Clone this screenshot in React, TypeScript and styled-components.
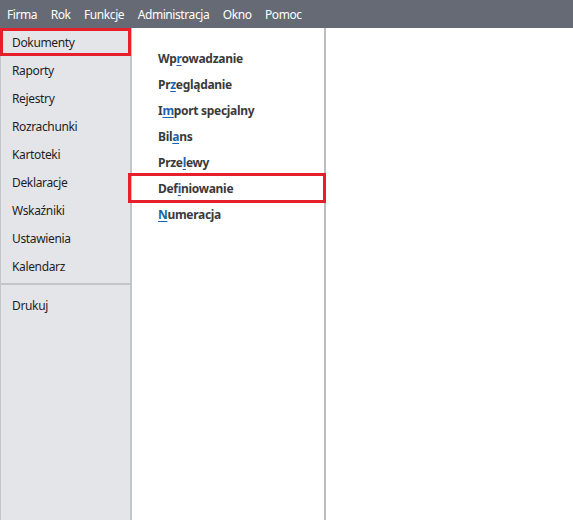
import React from "react";
import styled, { createGlobalStyle } from "styled-components";

const GlobalStyle = createGlobalStyle`
  html, body {
    margin: 0;
    padding: 0;
    background: #ffffff;
  }
  body {
    font-family: "Noto Sans", "Open Sans", sans-serif;
  }
`;

const Page = styled.div`
  width: 573px;
  height: 520px;
  display: flex;
  flex-direction: column;
  overflow: hidden;
`;

const MenuBar = styled.div`
  height: 28px;
  flex: 0 0 28px;
  background: #656a74;
  display: flex;
  align-items: center;
  padding-left: 7px;
  gap: 13.5px;
`;

const MenuItem = styled.span`
  color: #ffffff;
  font-size: 12px;
  letter-spacing: -0.42px;
`;

const Body = styled.div`
  flex: 1;
  display: flex;
  min-height: 0;
`;

const Sidebar = styled.nav`
  width: 129px;
  background: #e4e5e9;
  border-left: 1px solid #c4c5ca;
  border-right: 2px solid #c4c5ca;
  display: flex;
  flex-direction: column;
`;

const SideItem = styled.div<{ $marked?: boolean }>`
  height: 28px;
  display: flex;
  align-items: center;
  font-size: 12px;
  letter-spacing: -0.35px;
  color: #1e1e1e;
  box-sizing: border-box;
  margin-left: ${(p) => (p.$marked ? "-1px" : "0")};
  margin-right: ${(p) => (p.$marked ? "-1px" : "0")};
  padding-left: ${(p) => (p.$marked ? "12px" : "11px")};
  ${(p) => (p.$marked ? "outline: 3px solid #e61f2b; outline-offset: -3px;" : "")}
`;

const Separator = styled.div`
  height: 2px;
  background: #c4c5ca;
  margin: 3px 0 6px;
`;

const SubPanel = styled.section`
  width: 192px;
  border-right: 2px solid #bdbdc0;
  background: #ffffff;
  display: flex;
  flex-direction: column;
  padding-top: 17px;
`;

const SubItem = styled.div<{ $marked?: boolean }>`
  height: 26px;
  display: flex;
  align-items: center;
  padding-left: 26px;
  font-size: 12px;
  font-weight: 700;
  letter-spacing: -0.3px;
  color: #3a3a3a;
  ${(p) =>
    p.$marked
      ? "outline: 3px solid #e61f2b; outline-offset: -1px; margin-left: -2px; padding-left: 28px;"
      : ""}
`;

const Key = styled.span`
  color: #1a63b0;
  text-decoration: underline;
  text-underline-offset: 2px;
`;

const Rest = styled.div`
  flex: 1;
  background: #ffffff;
`;

const topMenu = ["Firma", "Rok", "Funkcje", "Administracja", "Okno", "Pomoc"];

const sideMenu = [
  "Dokumenty",
  "Raporty",
  "Rejestry",
  "Rozrachunki",
  "Kartoteki",
  "Deklaracje",
  "Wskaźniki",
  "Ustawienia",
  "Kalendarz",
];

// [before, hot key, after]
const subMenu: [string, string, string][] = [
  ["Wp", "r", "owadzanie"],
  ["Pr", "z", "eglądanie"],
  ["I", "m", "port specjalny"],
  ["Bil", "a", "ns"],
  ["Prze", "l", "ewy"],
  ["Def", "i", "niowanie"],
  ["", "N", "umeracja"],
];

const App = (): JSX.Element => {
  return (
    <Page>
      <GlobalStyle />
      <MenuBar>
        {topMenu.map((m) => (
          <MenuItem key={m}>{m}</MenuItem>
        ))}
      </MenuBar>
      <Body>
        <Sidebar>
          {sideMenu.map((s, i) => (
            <SideItem key={s} $marked={i === 0}>
              {s}
            </SideItem>
          ))}
          <Separator />
          <SideItem>Drukuj</SideItem>
        </Sidebar>
        <SubPanel>
          {subMenu.map(([a, k, b]) => (
            <SubItem key={a + k + b} $marked={k === "i" && a === "Def"}>
              {a}
              <Key>{k}</Key>
              {b}
            </SubItem>
          ))}
        </SubPanel>
        <Rest />
      </Body>
    </Page>
  );
};

export default App;
